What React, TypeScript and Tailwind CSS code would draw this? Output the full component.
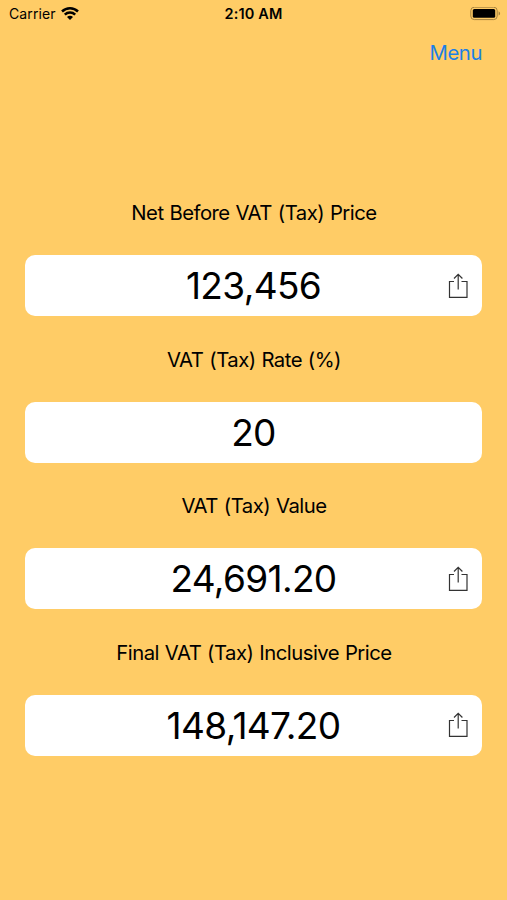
import { ReactNode } from "react";

type FieldProps = {
	label: ReactNode;
	value: ReactNode;
	share?: boolean;
};

function WifiIcon() {
	return (
		<svg className="w-[18px] h-[14px]" viewBox="0 0 18 14" fill="none" stroke="#000" strokeWidth="2.5">
			<path d="M1 4.5a11.6 11.6 0 0 1 16 0" />
			<path d="M3.8 7.7a7.5 7.5 0 0 1 10.4 0" />
			<path d="M9 12.9L6 10a4.2 4.2 0 0 1 6 0z" fill="#000" stroke="none" />
		</svg>
	);
}

function BatteryIcon() {
	return (
		<svg className="w-[31px] h-[14px]" viewBox="0 0 31 14">
			<rect x="0.8" y="0.2" width="26.4" height="12.4" rx="3.5" fill="none" stroke="#a5833f" />
			<rect x="2.8" y="2" width="22.4" height="8.8" rx="1.5" fill="#000" />
			<path d="M28.6 4.2c2 .8 2 3.6 0 4.4z" fill="#a5833f" />
		</svg>
	);
}

function ShareIcon() {
	return (
		<svg className="w-5 h-[26px]" viewBox="0 0 20 26" fill="none" stroke="#333" strokeWidth="1.2">
			<path d="M6 8.5H1.5V24.4H19V8.5h-5.5" />
			<path d="M10.2 16.5V1.5M6 5.5l4.2-4.2 4.2 4.2" />
		</svg>
	);
}

function Field({ label, value, share }: FieldProps) {
	return (
		<div className="h-[146.6px]">
			<p className="h-[62px] pt-1.5 pl-px text-center text-[20.3px] leading-7 tracking-[-0.5px] [word-spacing:0.6px]">
				{label}
			</p>
			<div className="h-[61px] px-[14px] rounded-[10px] bg-white grid grid-cols-[20px_1fr_20px] items-center">
				<span />
				<span className="text-center text-[37px] leading-none tracking-[-0.65px]">{value}</span>
				{share && <ShareIcon />}
			</div>
		</div>
	);
}

export default function App() {
	return (
		<div className="w-full h-[900px] overflow-hidden bg-[#ffcc66] text-black font-['Inter',sans-serif]">
			<header className="h-[27px] pl-[9px] pr-[6px] grid grid-cols-[1fr_auto_1fr] items-center text-[14px]">
				<div className="flex items-center gap-[5px]">
					<span className="tracking-[0.1px]">Carrier</span>
					<WifiIcon />
				</div>
				<span className="pr-[3px] text-center text-[14.5px] font-semibold tracking-[0.15px]">2:10 AM</span>
				<div className="flex justify-end">
					<BatteryIcon />
				</div>
			</header>
			<nav className="h-[166px] pt-[12px] pr-[25px] text-right">
				<button className="text-[20.3px] leading-7 tracking-[-0.4px] text-[#1a80e6]">Menu</button>
			</nav>
			<main className="px-[25px]">
				<Field label="Net Before VAT (Tax) Price" value="123,456" share />
				<Field label="VAT (Tax) Rate (%)" value="20" />
				<Field label="VAT (Tax) Value" value="24,691.20" share />
				<Field label="Final VAT (Tax) Inclusive Price" value="148,147.20" share />
			</main>
		</div>
	);
}
